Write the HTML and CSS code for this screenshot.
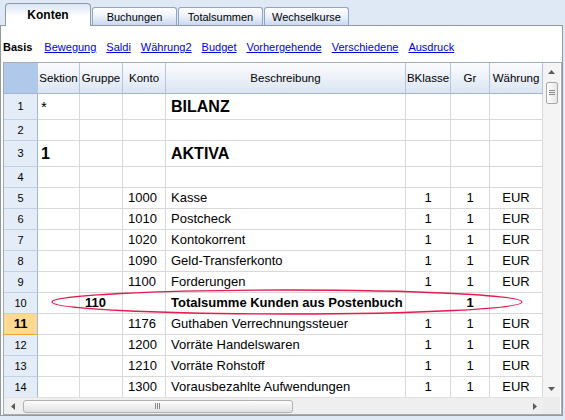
FILE: index.html
```html
<!DOCTYPE html>
<html lang="de">
<head>
<meta charset="utf-8">
<title>Konten</title>
<link rel="stylesheet" href="styles.css">
</head>
<body>
<div class="tabs">
  <div class="tab active">Konten</div>
  <div class="tab">Buchungen</div>
  <div class="tab">Totalsummen</div>
  <div class="tab">Wechselkurse</div>
</div>
<div class="panel">
  <div class="links">
    <span class="cur">Basis</span>
    <a href="#">Bewegung</a>
    <a href="#">Saldi</a>
    <a href="#">Währung2</a>
    <a href="#">Budget</a>
    <a href="#">Vorhergehende</a>
    <a href="#">Verschiedene</a>
    <a href="#">Ausdruck</a>
  </div>
  <div class="frame">
    <div class="table">
      <div class="row head">
        <div class="corner"></div><div>Sektion</div><div>Gruppe</div><div>Konto</div><div>Beschreibung</div><div>BKlasse</div><div>Gr</div><div>Währung</div>
      </div>
      <div class="row tall">
        <div class="n">1</div><div class="s star">*</div><div></div><div></div><div class="big">BILANZ</div><div></div><div></div><div></div>
      </div>
      <div class="row">
        <div class="n">2</div><div></div><div></div><div></div><div></div><div></div><div></div><div></div>
      </div>
      <div class="row tall">
        <div class="n">3</div><div class="s big">1</div><div></div><div></div><div class="big">AKTIVA</div><div></div><div></div><div></div>
      </div>
      <div class="row">
        <div class="n">4</div><div></div><div></div><div></div><div></div><div></div><div></div><div></div>
      </div>
      <div class="row">
        <div class="n">5</div><div></div><div></div><div>1000</div><div>Kasse</div><div class="c">1</div><div class="c">1</div><div class="c">EUR</div>
      </div>
      <div class="row">
        <div class="n">6</div><div></div><div></div><div>1010</div><div>Postcheck</div><div class="c">1</div><div class="c">1</div><div class="c">EUR</div>
      </div>
      <div class="row">
        <div class="n">7</div><div></div><div></div><div>1020</div><div>Kontokorrent</div><div class="c">1</div><div class="c">1</div><div class="c">EUR</div>
      </div>
      <div class="row">
        <div class="n">8</div><div></div><div></div><div>1090</div><div>Geld-Transferkonto</div><div class="c">1</div><div class="c">1</div><div class="c">EUR</div>
      </div>
      <div class="row">
        <div class="n">9</div><div></div><div></div><div>1100</div><div>Forderungen</div><div class="c">1</div><div class="c">1</div><div class="c">EUR</div>
      </div>
      <div class="row">
        <div class="n">10</div><div></div><div class="b">110</div><div></div><div class="b">Totalsumme Kunden aus Postenbuch</div><div></div><div class="c b">1</div><div></div>
      </div>
      <div class="row">
        <div class="n sel">11</div><div></div><div></div><div>1176</div><div>Guthaben Verrechnungssteuer</div><div class="c">1</div><div class="c">1</div><div class="c">EUR</div>
      </div>
      <div class="row">
        <div class="n">12</div><div></div><div></div><div>1200</div><div>Vorräte Handelswaren</div><div class="c">1</div><div class="c">1</div><div class="c">EUR</div>
      </div>
      <div class="row">
        <div class="n">13</div><div></div><div></div><div>1210</div><div>Vorräte Rohstoff</div><div class="c">1</div><div class="c">1</div><div class="c">EUR</div>
      </div>
      <div class="row">
        <div class="n">14</div><div></div><div></div><div>1300</div><div>Vorausbezahlte Aufwendungen</div><div class="c">1</div><div class="c">1</div><div class="c">EUR</div>
      </div>
    </div>
    <div class="vscroll">
      <div class="vbtn"><svg width="7" height="4" viewBox="0 0 7 4"><path d="M0 4 L3.5 0 L7 4 Z" fill="#5a5a5a"/></svg></div>
      <div class="vthumb"><svg width="6" height="6" viewBox="0 0 6 6"><path d="M0 0.5H6M0 2.5H6M0 4.5H6" stroke="#8a8a8a" stroke-width="1"/></svg></div>
      <div class="vbtn down"><svg width="7" height="4" viewBox="0 0 7 4"><path d="M0 0 L7 0 L3.5 4 Z" fill="#5a5a5a"/></svg></div>
    </div>
    <div class="hscroll">
      <div class="hbtn"><svg width="4" height="7" viewBox="0 0 4 7"><path d="M4 0 L0 3.5 L4 7 Z" fill="#5a5a5a"/></svg></div>
      <div class="hthumb"><svg width="6" height="6" viewBox="0 0 6 6"><path d="M0.5 0V6M2.5 0V6M4.5 0V6" stroke="#8a8a8a" stroke-width="1"/></svg></div>
      <div class="hbtn right"><svg width="4" height="7" viewBox="0 0 4 7"><path d="M0 0 L4 3.5 L0 7 Z" fill="#5a5a5a"/></svg></div>
    </div>
    <div class="scorner"></div>
    <svg class="mark" width="556" height="351" viewBox="0 0 556 351"><ellipse cx="283" cy="239" rx="235" ry="12" fill="none" stroke="#e61a4d" stroke-width="1.3"/></svg>
  </div>
</div>
</body>
</html>
```

FILE: styles.css
```css
body {
  margin: 0;
  width: 565px;
  height: 420px;
  overflow: hidden;
  background: #dfe9f5;
  font-family: "Liberation Sans", Arial, sans-serif;
  color: #000;
}

.tabs {
  display: flex;
  align-items: flex-end;
  height: 26px;
  padding-left: 5px;
  box-sizing: border-box;
  margin-bottom: -1px;
  position: relative;
  z-index: 1;
}

.tab {
  box-sizing: border-box;
  width: 85px;
  height: 19px;
  margin-right: 1px;
  border: 1px solid #8fa3c2;
  border-bottom-color: #919b9c;
  border-radius: 3px 3px 0 0;
  background: linear-gradient(#ffffff, #eef3fb 45%, #c9d9f1);
  font-size: 11px;
  display: flex;
  align-items: center;
  justify-content: center;
  padding-top: 1px;
}

.tab.active {
  width: 86px;
  height: 23px;
  border-color: #919b9c;
  border-bottom: none;
  border-radius: 4px 4px 0 0;
  background: linear-gradient(#d9e4f5, #ffffff 55%);
  font-weight: bold;
  font-size: 12px;
  padding-top: 0;
}

.panel {
  box-sizing: border-box;
  width: 563px;
  height: 391px;
  border: 1px solid #919b9c;
  background: #fff;
}

.links {
  box-sizing: border-box;
  height: 36px;
  padding: 14px 0 0 2px;
  display: flex;
  gap: 10px;
  font-size: 11px;
  line-height: 14px;
}

.links .cur {
  font-weight: bold;
  margin-right: 2px;
}

.links a {
  color: #0000e6;
  text-decoration: underline;
}

.frame {
  position: relative;
  box-sizing: border-box;
  margin-left: 2px;
  width: 559px;
  height: 353px;
  border: 1px solid #a5acb5;
  display: grid;
  grid-template-columns: 539px 17px;
  grid-template-rows: 334px 17px;
}

.table {
  overflow: hidden;
}

.row {
  display: grid;
  grid-template-columns: 34px 42px 43px 43px 240px 45px 39px 53px;
  height: 21px;
}

.row > div {
  box-sizing: border-box;
  border-right: 1px solid #d9d9d9;
  border-bottom: 1px solid #d9d9d9;
  font-size: 13px;
  line-height: 20px;
  padding: 0 5px;
  white-space: nowrap;
  overflow: hidden;
}

.row.tall {
  height: 26px;
}

.row.tall > div {
  line-height: 25px;
}

.row.head {
  height: 31px;
}

.row.head > div {
  background: linear-gradient(#fbfcfe, #dce5f2);
  border-right-color: #b3c4dc;
  border-bottom-color: #a3b6d1;
  text-align: center;
  font-size: 11.5px;
  line-height: 31px;
  padding: 0;
}

.row.head > .corner {
  background: #b0c8ea;
}

.row > .n {
  background: #e4ecf7;
  border-right-color: #9fb6d6;
  border-bottom-color: #c3d1e4;
  text-align: center;
  font-size: 11px;
  padding: 0;
}

.row > .n.sel {
  background: #ffd98f;
  border-bottom-color: #f0a33a;
  font-weight: bold;
  font-size: 13px;
}

.row > .s {
  padding-left: 3px;
}

.row > .star {
  font-size: 15px;
}

.row > .big {
  font-size: 16px;
  font-weight: bold;
}

.row > .b {
  font-weight: bold;
}

.row > .c {
  text-align: center;
  padding: 0;
}

.vscroll {
  grid-column: 2;
  grid-row: 1;
  background: #f4f4f4;
  display: flex;
  flex-direction: column;
  align-items: center;
}

.vbtn {
  height: 17px;
  width: 17px;
  display: flex;
  align-items: center;
  justify-content: center;
  flex: none;
}

.vbtn.down {
  margin-top: auto;
}

.vthumb {
  box-sizing: border-box;
  margin-top: 2px;
  width: 12px;
  height: 22px;
  border: 1px solid #a9a9a9;
  border-radius: 2px;
  background: linear-gradient(90deg, #ffffff, #e6e6e6);
  display: flex;
  align-items: center;
  justify-content: center;
}

.hscroll {
  grid-column: 1;
  grid-row: 2;
  background: #efefef;
  border-top: 1px solid #e2e2e2;
  display: flex;
  align-items: center;
}

.hbtn {
  width: 17px;
  height: 16px;
  display: flex;
  align-items: center;
  justify-content: center;
  flex: none;
}

.hbtn.right {
  margin-left: auto;
}

.hthumb {
  box-sizing: border-box;
  margin-left: 2px;
  width: 270px;
  height: 13px;
  border: 1px solid #b0b0b0;
  border-radius: 3px;
  background: linear-gradient(#fdfdfd, #e1e1e1);
  display: flex;
  align-items: center;
  justify-content: center;
}

.scorner {
  grid-column: 2;
  grid-row: 2;
  background: #ececec;
}

.mark {
  position: absolute;
  left: 0;
  top: 0;
  pointer-events: none;
}
```
